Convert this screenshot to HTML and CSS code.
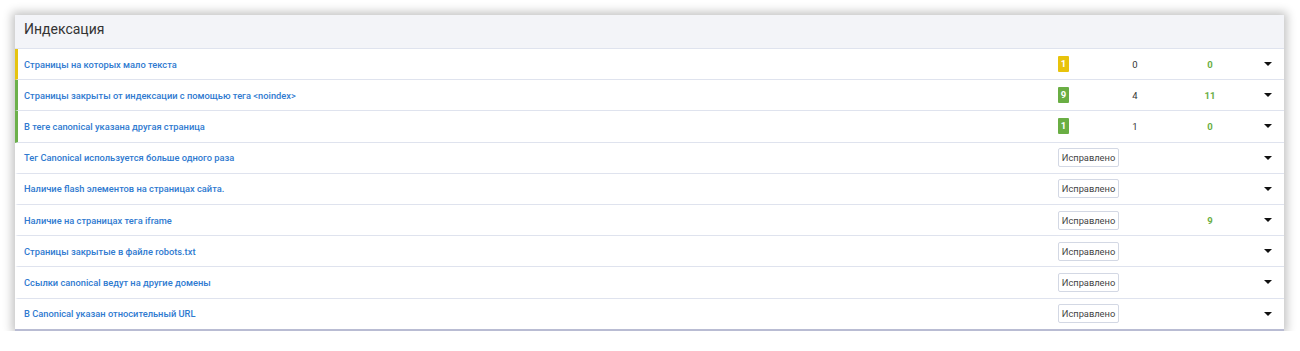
FILE: index.html
```html
<!DOCTYPE html>
<html lang="ru">
<head>
    <meta charset="UTF-8">
    <meta name="viewport" content="width=device-width, initial-scale=1.0">
    <title>Индексация</title>
    <link rel="stylesheet" href="styles.css">
</head>
<body>
    <div class="panel">
        <div class="panel-header">Индексация</div>
        <ul class="checks">
            <li class="check warn">
                <a href="#" class="check-title">Страницы на которых мало текста</a>
                <div class="check-status"><span class="badge badge-yellow">1</span></div>
                <div class="check-count">0</div>
                <div class="check-fixed">0</div>
                <div class="check-toggle"><span class="caret"></span></div>
            </li>
            <li class="check ok">
                <a href="#" class="check-title">Страницы закрыты от индексации с помощью тега &lt;noindex&gt;</a>
                <div class="check-status"><span class="badge badge-green">9</span></div>
                <div class="check-count">4</div>
                <div class="check-fixed">11</div>
                <div class="check-toggle"><span class="caret"></span></div>
            </li>
            <li class="check ok">
                <a href="#" class="check-title">В теге canonical указана другая страница</a>
                <div class="check-status"><span class="badge badge-green">1</span></div>
                <div class="check-count">1</div>
                <div class="check-fixed">0</div>
                <div class="check-toggle"><span class="caret"></span></div>
            </li>
            <li class="check">
                <a href="#" class="check-title">Тег Canonical используется больше одного раза</a>
                <div class="check-status"><span class="fixed-btn">Исправлено</span></div>
                <div class="check-count"></div>
                <div class="check-fixed"></div>
                <div class="check-toggle"><span class="caret"></span></div>
            </li>
            <li class="check">
                <a href="#" class="check-title">Наличие flash элементов на страницах сайта.</a>
                <div class="check-status"><span class="fixed-btn">Исправлено</span></div>
                <div class="check-count"></div>
                <div class="check-fixed"></div>
                <div class="check-toggle"><span class="caret"></span></div>
            </li>
            <li class="check">
                <a href="#" class="check-title">Наличие на страницах тега iframe</a>
                <div class="check-status"><span class="fixed-btn">Исправлено</span></div>
                <div class="check-count"></div>
                <div class="check-fixed">9</div>
                <div class="check-toggle"><span class="caret"></span></div>
            </li>
            <li class="check">
                <a href="#" class="check-title">Страницы закрытые в файле robots.txt</a>
                <div class="check-status"><span class="fixed-btn">Исправлено</span></div>
                <div class="check-count"></div>
                <div class="check-fixed"></div>
                <div class="check-toggle"><span class="caret"></span></div>
            </li>
            <li class="check">
                <a href="#" class="check-title">Ссылки canonical ведут на другие домены</a>
                <div class="check-status"><span class="fixed-btn">Исправлено</span></div>
                <div class="check-count"></div>
                <div class="check-fixed"></div>
                <div class="check-toggle"><span class="caret"></span></div>
            </li>
            <li class="check">
                <a href="#" class="check-title">В Canonical указан относительный URL</a>
                <div class="check-status"><span class="fixed-btn">Исправлено</span></div>
                <div class="check-count"></div>
                <div class="check-fixed"></div>
                <div class="check-toggle"><span class="caret"></span></div>
            </li>
        </ul>
    </div>
</body>
</html>
```

FILE: styles.css
```css
/* Page */
body {
  margin: 0;
  padding: 15px 16px 0 15px;
  background-color: #fff;
  font-family: Roboto, "Liberation Sans", Arial, sans-serif;
}

/* Panel */
.panel {
  background-color: #fff;
  border-bottom: 2px solid #b9bcd3;
  box-shadow: 0 0 9px 3px rgba(0, 0, 0, 0.24);
}

.panel-header {
  height: 33px;
  line-height: 29px;
  padding-left: 9px;
  background-color: #f3f4f8;
  border-bottom: 1px solid #dfe3ee;
  color: #333;
  font-size: 14px;
}

/* Checks list */
.checks {
  list-style: none;
  padding: 0;
  margin: 0;
}

.check {
  display: flex;
  align-items: center;
  height: 30.2px;
  border-bottom: 1px solid #dfe3ee;
  border-left: 3px solid transparent;
}

.check:last-child {
  border-bottom: none;
}

.check.warn {
  border-left-color: #e6c411;
}

.check.ok {
  border-left-color: #6cb04a;
}

.check-title {
  flex: 1;
  padding-left: 6px;
  color: #2f7ad0;
  font-size: 9.3px;
  font-weight: 500;
  text-decoration: none;
}

.check-status {
  width: 52px;
  display: flex;
  align-items: center;
}

.check-count {
  width: 50px;
  text-align: center;
  color: #333;
  font-size: 9.5px;
}

.check-fixed {
  width: 100px;
  text-align: center;
  color: #6aae44;
  font-size: 9.5px;
  font-weight: 700;
}

.check-toggle {
  width: 16px;
  margin-right: 8px;
  display: flex;
  justify-content: center;
}

.caret {
  width: 0;
  height: 0;
  border-left: 4px solid transparent;
  border-right: 4px solid transparent;
  border-top: 4px solid #111;
}

/* Badges and buttons */
.badge {
  display: inline-block;
  width: 11px;
  height: 16px;
  line-height: 16px;
  border-radius: 1px;
  color: #fff;
  font-size: 9.5px;
  font-weight: 700;
  text-align: center;
}

.badge-yellow {
  background-color: #e8c30c;
}

.badge-green {
  background-color: #6aae44;
}

.fixed-btn {
  display: inline-block;
  flex-shrink: 0;
  width: 59px;
  height: 17px;
  line-height: 17px;
  border: 1px solid #d3d8e4;
  border-radius: 2px;
  color: #444;
  font-size: 9.3px;
  text-align: center;
  white-space: nowrap;
}
```
